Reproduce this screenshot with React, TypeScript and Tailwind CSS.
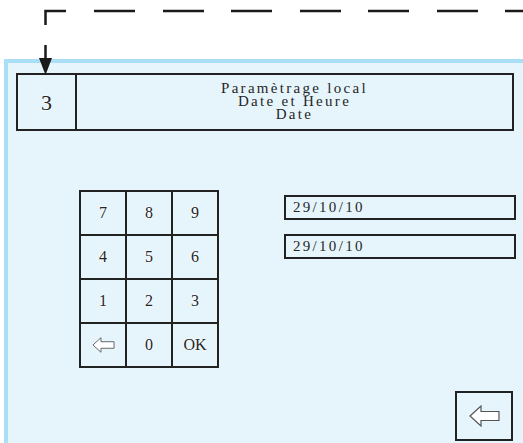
import React from 'react'

const keys = ['7', '8', '9', '4', '5', '6', '1', '2', '3', 'back', '0', 'OK']

const ArrowLeft: React.FC<{ w: number; h: number }> = ({ w, h }) => (
  <svg width={w} height={h} viewBox="0 0 31 22">
    <polygon
      points="1,11 12,1 12,6.5 30,6.5 30,15.5 12,15.5 12,21"
      fill="#ffffff"
      stroke="#555555"
      strokeWidth="1.2"
      strokeLinejoin="miter"
    />
  </svg>
)

// dashed link coming down onto the "3" cell
const Connector = () => (
  <svg width={523} height={80} className="absolute left-0 top-0 z-10">
    <g stroke="#1a1a1a" strokeWidth="2.5" fill="none">
      <polyline points="66,11 45.5,11 45.5,25" />
      {[94, 163, 231, 300, 368, 437, 505].map((x) => (
        <line key={x} x1={x} y1={11} x2={x + 41} y2={11} />
      ))}
      <line x1={45.5} y1={45} x2={45.5} y2={60} />
    </g>
    <polygon points="39,58 52,58 45.5,75" fill="#1a1a1a" />
  </svg>
)

const App: React.FC = () => {
  return (
    <div className="relative w-[523px] h-[443px] overflow-hidden bg-white [font-family:'Liberation_Serif',serif] text-[#262626]">
      <Connector />
      <div className="h-[59px]" />
      <div className="ml-[4px] h-[384px] border-l-4 border-t-4 border-[#abdff5] bg-[#e6f5fc] flex flex-col">
        <div className="ml-[8px] mt-[10px] w-[498px] h-[58px] border-2 border-[#222] flex">
          <div className="w-[59px] border-r-2 border-[#222] flex items-center justify-center text-[22px] [text-shadow:0_0_2px_#fff,0_0_2px_#fff]">
            3
          </div>
          <div className="flex-1 flex flex-col items-center justify-center text-[15px] leading-[13px] tracking-[2.3px] pb-[1px]">
            <span>Paramètrage local</span>
            <span>Date et Heure</span>
            <span>Date</span>
          </div>
        </div>

        <div className="flex mt-[59px]">
          <div className="ml-[71px] grid grid-cols-[repeat(3,44px)] grid-rows-[repeat(4,42px)] gap-[2px] border-2 border-[#222] bg-[#222] w-[140px]">
            {keys.map((k) => (
              <div
                key={k}
                className="bg-[#e6f5fc] flex items-center justify-center text-[16px] [text-shadow:0_0_2px_#fff,0_0_2px_#fff]"
              >
                {k === 'back' ? <ArrowLeft w={25} h={16} /> : k}
              </div>
            ))}
          </div>
          <div className="ml-[65px] mt-[5px] flex flex-col gap-[14px]">
            <div className="w-[232px] h-[25px] border-2 border-[#222] pl-[7px] flex items-center text-[15px] tracking-[2.3px]">
              29/10/10
            </div>
            <div className="w-[232px] h-[25px] border-2 border-[#222] pl-[7px] flex items-center text-[15px] tracking-[2.3px]">
              29/10/10
            </div>
          </div>
        </div>

        <div className="mt-auto mb-[2px] mr-[10px] flex justify-end">
          <div className="w-[58px] h-[50px] border-2 border-[#222] flex items-center justify-center">
            <ArrowLeft w={31} h={22} />
          </div>
        </div>
      </div>
    </div>
  )
}

export default App
